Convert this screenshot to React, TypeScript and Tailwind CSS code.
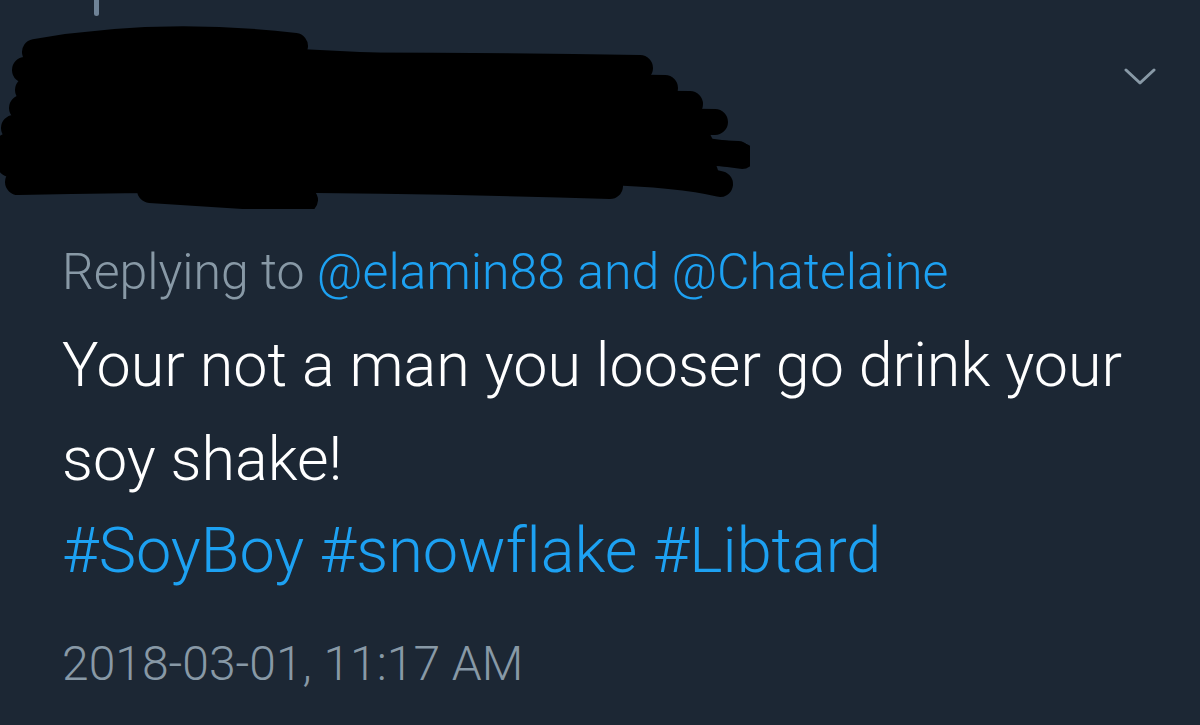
import React from 'react';

const Scribble: React.FC = () => (
  <svg width="750" height="205" viewBox="0 0 750 205" className="shrink-0">
    <g stroke="#000" strokeWidth="26" strokeLinecap="round" fill="none">
      <path d="M35 48 Q160 26 295 42" />
      <path d="M25 66 Q300 58 640 64" />
      <path d="M28 86 Q340 78 665 84" />
      <path d="M22 104 Q360 96 690 100" />
      <path d="M14 124 Q380 112 715 118" />
      <path d="M8 142 Q380 132 738 150" />
      <path d="M10 160 Q360 156 705 168" />
      <path d="M18 178 Q300 172 610 182" />
      <path d="M150 186 Q240 192 305 196" />
      <path d="M560 132 Q660 140 742 152" />
      <path d="M600 168 Q680 170 720 180" />
    </g>
    <path d="M40 50 L300 45 L640 62 L700 110 L720 150 L600 178 L30 180 L20 120 Z" fill="#000" />
  </svg>
);

const Chevron: React.FC = () => (
  <svg width="32" height="18" viewBox="0 0 32 18" fill="none">
    <path d="M2 2 L16 15 L30 2" stroke="#8899a6" strokeWidth="3" strokeLinecap="round" strokeLinejoin="round" />
  </svg>
);

export default function App() {
  return (
    <div className="w-[1200px] h-[725px] bg-[#1c2734] overflow-hidden font-['Roboto',Arial,sans-serif] font-light [font-variant-ligatures:none]">
      <div className="relative h-[244px] flex justify-between">
        <div className="absolute left-[94px] top-0 w-[5px] h-[16px] rounded-b-full bg-[#6f8397]" />
        <div className="pt-[4px]">
          <Scribble />
        </div>
        <div className="pt-[68px] pr-[44px]">
          <Chevron />
        </div>
      </div>
      <div className="pl-[62px]">
        <p className="text-[50px] leading-[56px] text-[#8899a6]">
          Replying to <span className="text-[#1da1f2]">@elamin88</span>{' '}
          <span className="text-[#1da1f2]">and @Chatelaine</span>
        </p>
        <p className="mt-[18px] max-w-[1110px] text-[61px] leading-[94px] text-white">
          Your not a man you looser go drink your soy shake!
        </p>
        <p className="-mt-[2px] text-[63px] leading-[94px] text-[#1da1f2]">#SoyBoy #snowflake #Libtard</p>
        <p className="mt-[38px] text-[48px] leading-[56px] text-[#8899a6]">2018-03-01, 11:17 AM</p>
      </div>
    </div>
  );
}
